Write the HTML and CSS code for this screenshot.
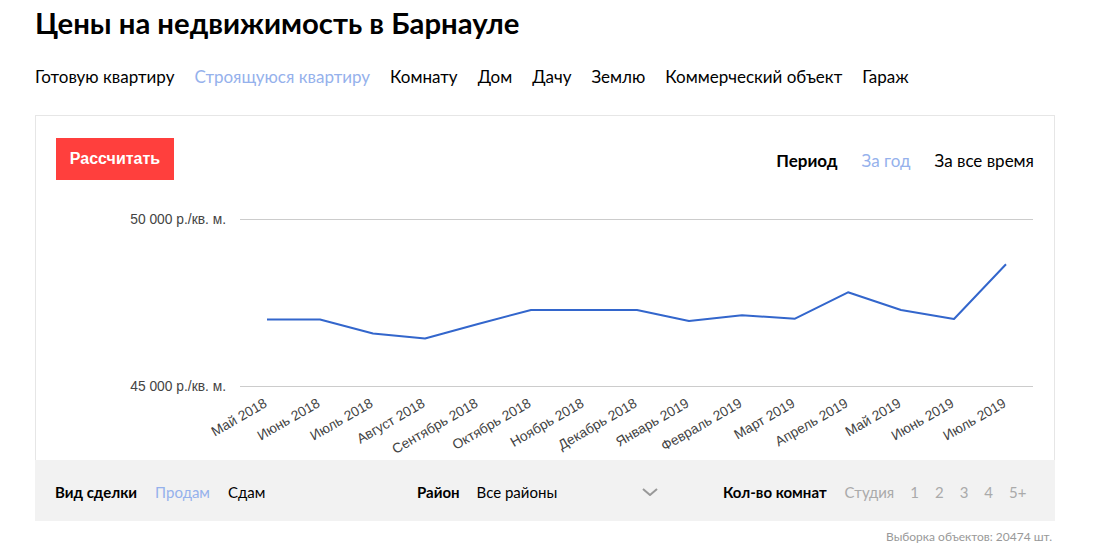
FILE: index.html
```html
<!DOCTYPE html>
<html lang="ru">

<head>
    <meta charset="UTF-8">
    <meta name="viewport" content="width=device-width, initial-scale=1.0">
    <title>Цены на недвижимость в Барнауле</title>
    <link rel="stylesheet" href="styles.css">
</head>

<body>
    <div class="page">
        <h1 class="title">Цены на недвижимость в Барнауле</h1>
        <div class="types">
            <a href="#">Готовую квартиру</a>
            <a href="#" class="active">Строящуюся квартиру</a>
            <a href="#">Комнату</a>
            <a href="#">Дом</a>
            <a href="#">Дачу</a>
            <a href="#">Землю</a>
            <a href="#">Коммерческий объект</a>
            <a href="#">Гараж</a>
        </div>

        <div class="card">
            <div class="card-head">
                <button class="calc-button">Рассчитать</button>
                <div class="period">
                    <span class="period-label">Период</span>
                    <a href="#" class="active">За год</a>
                    <a href="#">За все время</a>
                </div>
            </div>
            <svg class="chart" viewBox="36 180 1018 280" width="1018" height="280">
                <line class="grid" x1="240" y1="219.5" x2="1033" y2="219.5" />
                <line class="grid" x1="240" y1="386.5" x2="1033" y2="386.5" />
                <text class="axis" x="226" y="224" text-anchor="end">50 000 р./кв. м.</text>
                <text class="axis" x="226" y="391" text-anchor="end">45 000 р./кв. м.</text>
                <polyline class="line" points="267,319.5 320,319.5 373,333.5 425,338.5 478,324 531,310 584,310 637,310 689,321 742,315.3 795,318.7 848,292.3 901,310 954,319 1006,264.3" />
                <g class="months">
                    <text transform="translate(268,406) rotate(-30)" text-anchor="end">Май 2018</text>
                    <text transform="translate(321,406) rotate(-30)" text-anchor="end">Июнь 2018</text>
                    <text transform="translate(374,406) rotate(-30)" text-anchor="end">Июль 2018</text>
                    <text transform="translate(426,406) rotate(-30)" text-anchor="end">Август 2018</text>
                    <text transform="translate(479,406) rotate(-30)" text-anchor="end">Сентябрь 2018</text>
                    <text transform="translate(532,406) rotate(-30)" text-anchor="end">Октябрь 2018</text>
                    <text transform="translate(585,406) rotate(-30)" text-anchor="end">Ноябрь 2018</text>
                    <text transform="translate(638,406) rotate(-30)" text-anchor="end">Декабрь 2018</text>
                    <text transform="translate(690,406) rotate(-30)" text-anchor="end">Январь 2019</text>
                    <text transform="translate(743,406) rotate(-30)" text-anchor="end">Февраль 2019</text>
                    <text transform="translate(796,406) rotate(-30)" text-anchor="end">Март 2019</text>
                    <text transform="translate(849,406) rotate(-30)" text-anchor="end">Апрель 2019</text>
                    <text transform="translate(902,406) rotate(-30)" text-anchor="end">Май 2019</text>
                    <text transform="translate(955,406) rotate(-30)" text-anchor="end">Июнь 2019</text>
                    <text transform="translate(1007,406) rotate(-30)" text-anchor="end">Июль 2019</text>
                </g>
            </svg>
        </div>

        <div class="filters">
            <div class="filter filter-deal">
                <span class="filter-label">Вид сделки</span>
                <a href="#" class="active">Продам</a>
                <a href="#">Сдам</a>
            </div>
            <div class="filter filter-district">
                <span class="filter-label">Район</span>
                <div class="select">
                    <span>Все районы</span>
                    <svg class="chevron" width="16" height="8" viewBox="0 0 16 8">
                        <polyline points="1,1 8,7 15,1" />
                    </svg>
                </div>
            </div>
            <div class="filter filter-rooms">
                <span class="filter-label">Кол-во комнат</span>
                <a href="#" class="muted">Студия</a>
                <a href="#" class="muted num">1</a>
                <a href="#" class="muted num">2</a>
                <a href="#" class="muted num">3</a>
                <a href="#" class="muted num">4</a>
                <a href="#" class="muted num">5+</a>
            </div>
        </div>
        <div class="total">Выборка объектов: 20474 шт.</div>
    </div>
</body>

</html>
```

FILE: styles.css
```css
body {
    margin: 0;
    padding: 0;
    background-color: #ffffff;
    color: #000000;
    font-family: 'Lato', 'Open Sans', sans-serif;
}

a {
    color: #000000;
    text-decoration: none;
}

.page {
    width: 1020px;
    padding: 0 35px;
}

.title {
    margin: 0;
    padding-top: 5px;
    font-size: 29.3px;
    line-height: 36px;
    font-weight: bold;
}

.types {
    display: flex;
    gap: 20px;
    margin-top: 24px;
    font-size: 17px;
    line-height: 24px;
}

.types a.active,
.period a.active,
.filter a.active {
    color: #95b1ec;
}

.card {
    margin-top: 26px;
    border: 1px solid #e6e6e6;
    border-bottom: none;
}

.card-head {
    display: flex;
    justify-content: space-between;
    align-items: center;
    padding: 22px 20px 0 20px;
}

.calc-button {
    width: 118px;
    height: 42px;
    border: none;
    background-color: #ff3f3d;
    color: #ffffff;
    font-family: 'Liberation Sans', Arial, sans-serif;
    font-weight: bold;
    font-size: 16px;
    padding: 0;
    cursor: pointer;
}

.period {
    display: flex;
    gap: 24px;
    font-size: 17px;
    line-height: 24px;
    padding-top: 4px;
}

.period-label,
.filter-label {
    font-weight: bold;
}

.chart {
    display: block;
}

.chart .grid {
    stroke: #cccccc;
    stroke-width: 1;
}

.chart .axis,
.chart .months text {
    font-family: 'Liberation Sans', Arial, sans-serif;
    font-size: 13.8px;
    fill: #444444;
}

.chart .line {
    fill: none;
    stroke: #3366cc;
    stroke-width: 2;
    stroke-linejoin: round;
}

.filters {
    display: flex;
    align-items: center;
    height: 61px;
    padding-left: 20px;
    background-color: #f2f2f2;
    font-size: 15px;
    padding-top: 2px;
    box-sizing: border-box;
}

.filter {
    display: flex;
    align-items: center;
    gap: 18px;
}

.filter-deal {
    width: 362px;
}

.filter-district {
    width: 306px;
    gap: 17px;
}

.filter-rooms {
    gap: 16px;
}

.filter-rooms .muted:first-of-type {
    margin-left: 2px;
}

.select {
    display: flex;
    align-items: center;
    justify-content: space-between;
    width: 181px;
}

.chevron polyline {
    fill: none;
    stroke: #999999;
    stroke-width: 2;
}

.filter a.muted {
    color: #aaaaaa;
}

.total {
    text-align: right;
    padding-right: 3px;
    margin-top: 8px;
    font-size: 12px;
    color: #999999;
}
```
